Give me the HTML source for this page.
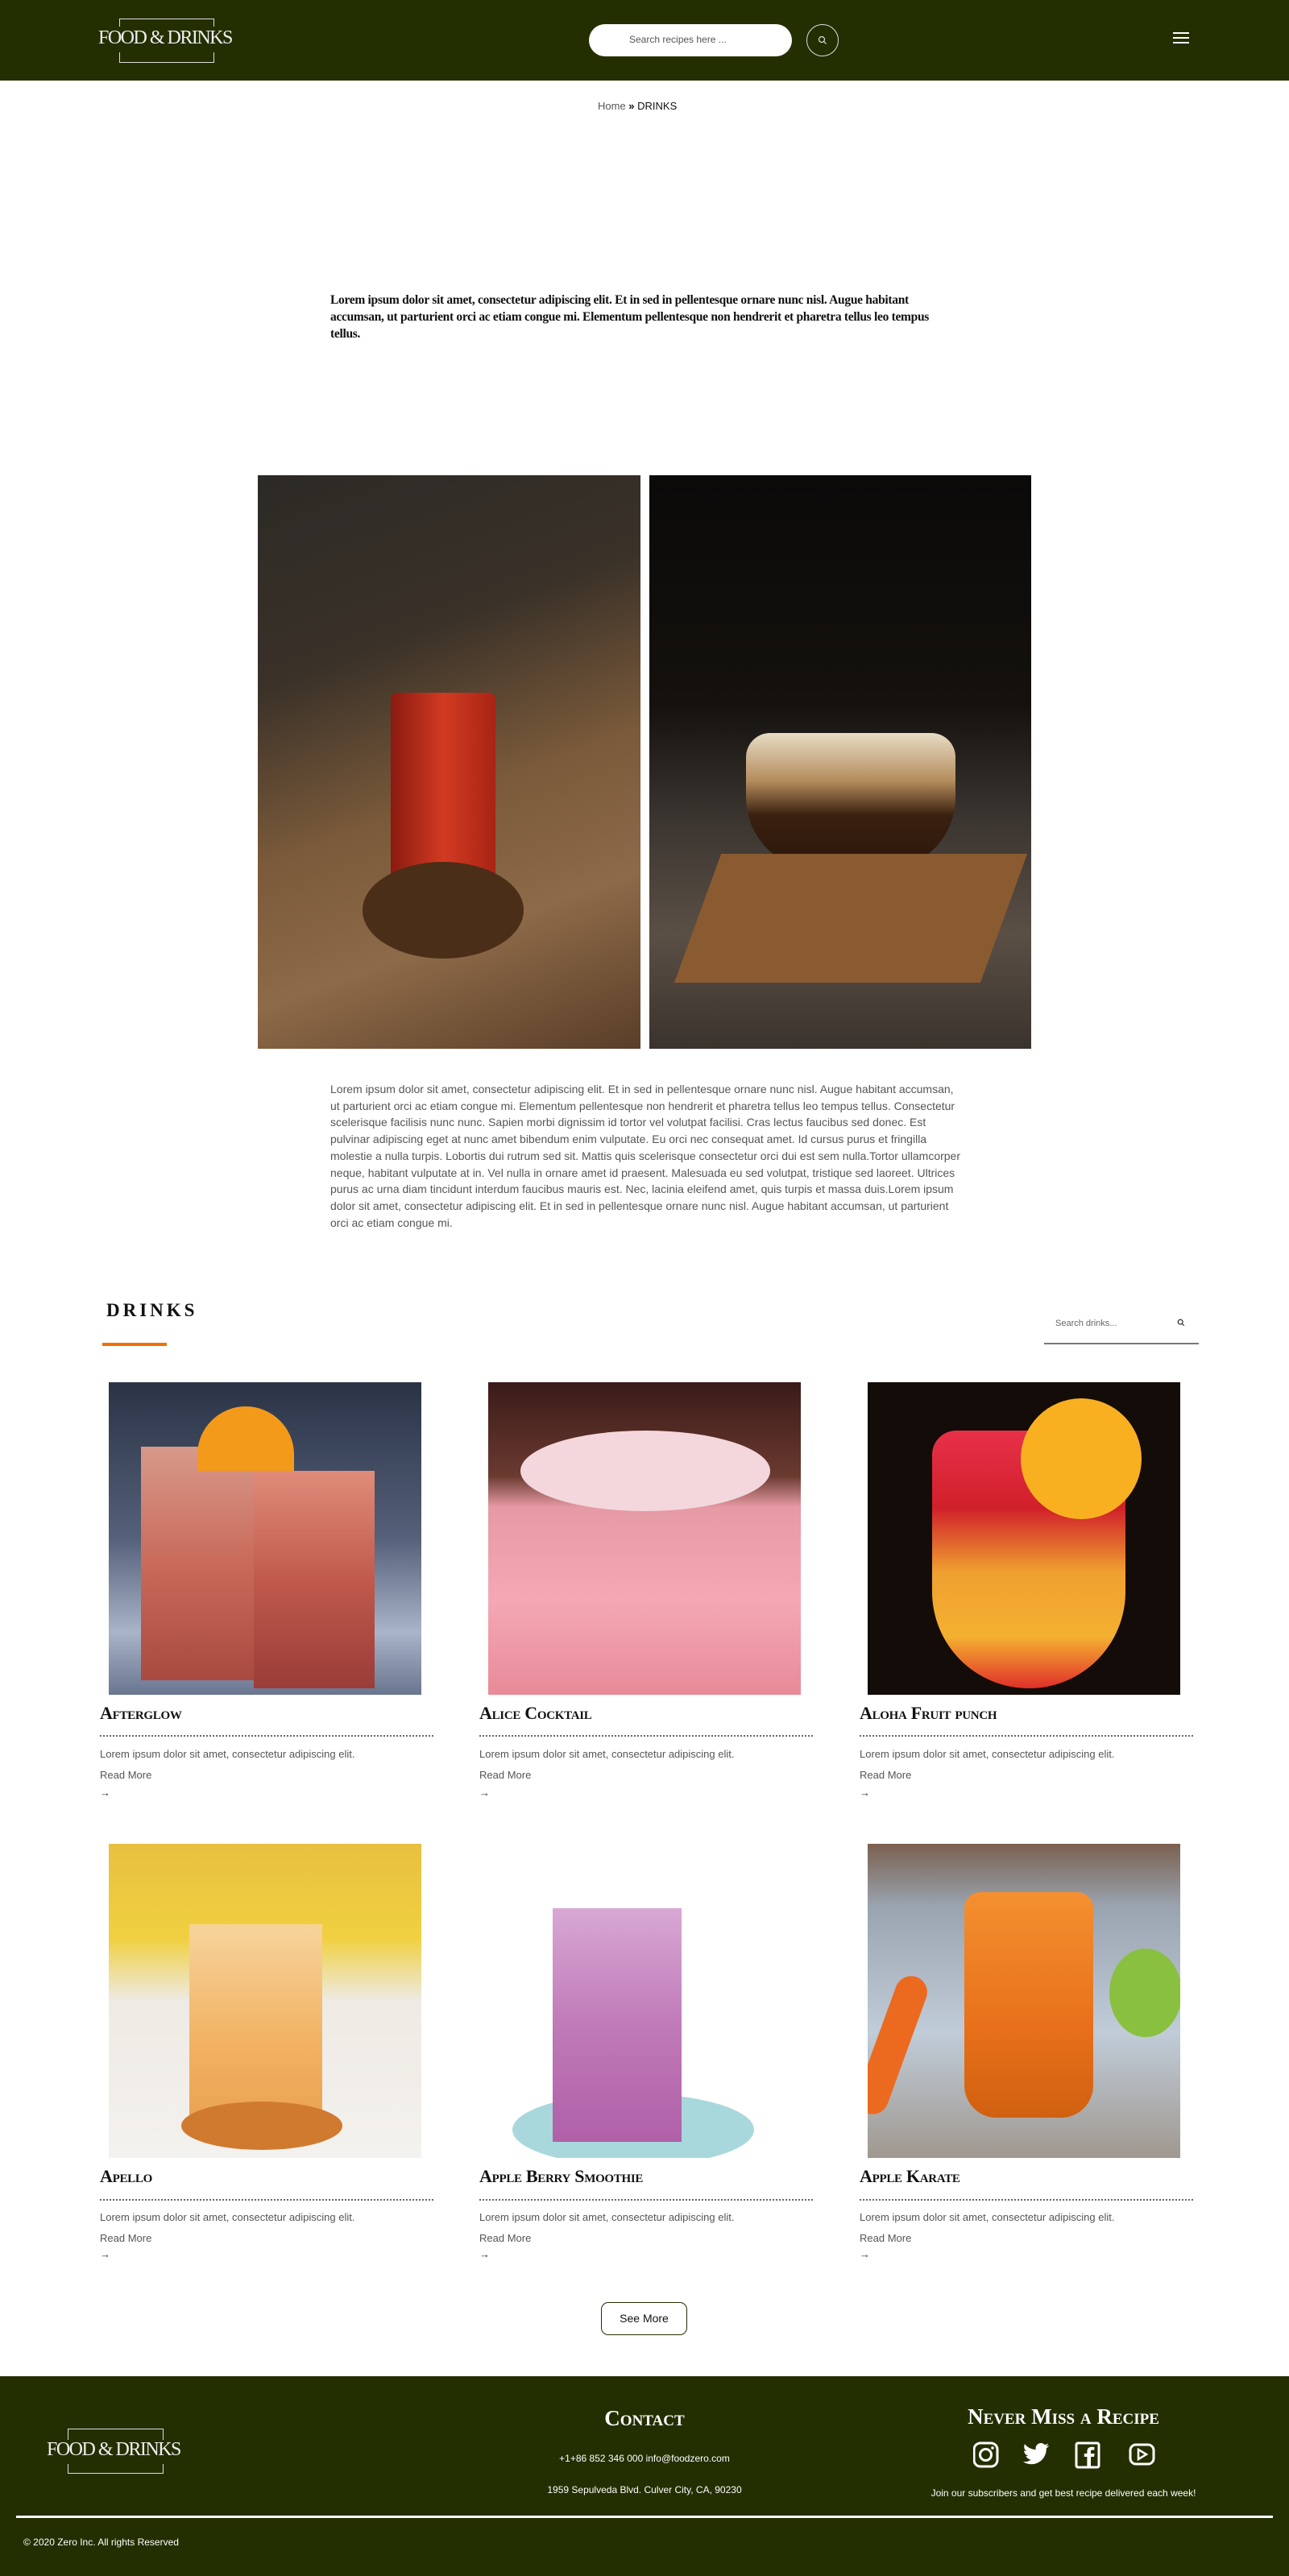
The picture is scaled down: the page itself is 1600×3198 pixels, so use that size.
<!DOCTYPE html>
<html><head><meta charset="utf-8"><style>
*{margin:0;padding:0;box-sizing:border-box}
body{width:1600px;height:3198px;position:relative;background:#fff;font-family:"Liberation Sans",sans-serif;overflow:hidden}
.a{position:absolute}
.hdr{left:0;top:0;width:1600px;height:100px;background:#232f00}
.logo{color:#eee;font-family:"Liberation Serif",serif;font-size:24px;letter-spacing:-1.5px;font-weight:300}
.p{font-size:14px;color:#555;line-height:20.7px}
.t{font-family:"Liberation Serif",serif;font-weight:bold;font-variant:small-caps;font-size:22px;color:#111;letter-spacing:-0.3px}
.dot{height:0;border-top:2px dotted #666}
.ct{font-size:13px;color:#555}
.img{overflow:hidden}
.ft{color:#fff}
</style></head><body>
<div class="a hdr"></div>
<div class="a" style="left:148px;top:23px;width:118px;height:55px;border:1.5px solid #ddd"></div>
<div class="a" style="left:120px;top:33px;width:172px;height:32px;background:#232f00"></div>
<div class="a logo" style="left:122px;top:34px">FOOD &amp; DRINKS</div>
<div class="a" style="left:731px;top:30px;width:252px;height:40px;background:#fff;border-radius:20px;font-size:12px;color:#555;padding:12px 0 0 50px">Search recipes here ...</div>
<div class="a" style="left:1001px;top:30px;width:40px;height:40px;border:1.5px solid #ddd;border-radius:50%"></div>
<svg class="a" style="left:1015px;top:44px" width="12" height="12" viewBox="0 0 12 12"><circle cx="5" cy="5" r="3.5" fill="none" stroke="#ddd" stroke-width="1.2"/><line x1="7.5" y1="7.5" x2="10.5" y2="10.5" stroke="#ddd" stroke-width="1.2"/></svg>
<div class="a" style="left:1456px;top:40px;width:20px;height:2px;background:#fff;box-shadow:0 6px 0 #fff,0 12px 0 #fff"></div>
<div class="a" style="left:742px;top:124px;font-size:13px;color:#555">Home <b style="color:#111">&#187;</b> <span style="color:#111">DRINKS</span></div>
<div class="a" style="left:410px;top:362px;width:772px;font-family:'Liberation Serif',serif;font-weight:bold;font-size:15.5px;line-height:21px;color:#111;letter-spacing:-0.3px">Lorem ipsum dolor sit amet, consectetur adipiscing elit. Et in sed in pellentesque ornare nunc nisl. Augue habitant accumsan, ut parturient orci ac etiam congue mi. Elementum pellentesque non hendrerit et pharetra tellus leo tempus tellus.</div>
<!-- hero images -->
<div class="a img" style="left:320px;top:590px;width:475px;height:712px;background:linear-gradient(160deg,#2c2a26 0%,#3a3128 30%,#7a5a3a 55%,#8d6a48 75%,#5a3e28 100%)">
<div class="a" style="left:165px;top:270px;width:130px;height:290px;background:linear-gradient(90deg,#8a1a10,#d23a22,#a82414);border-radius:8px 8px 20px 20px"></div>
<div class="a" style="left:130px;top:480px;width:200px;height:120px;background:#4a2e18;border-radius:50%"></div>
</div>
<div class="a img" style="left:806px;top:590px;width:474px;height:712px;background:linear-gradient(180deg,#0b0a09 0%,#14110e 40%,#3b3530 60%,#5a4f45 80%,#3a332d 100%)">
<div class="a" style="left:120px;top:320px;width:260px;height:170px;background:linear-gradient(180deg,#e7dcc5 0%,#b48c5c 35%,#3a2010 60%,#2a170a 100%);border-radius:30px 30px 90px 90px"></div>
<div class="a" style="left:60px;top:470px;width:380px;height:160px;background:#8a5a30;transform:skewX(-20deg)"></div>
</div>
<div class="a p" style="left:410px;top:1342px;width:782px">Lorem ipsum dolor sit amet, consectetur adipiscing elit. Et in sed in pellentesque ornare nunc nisl. Augue habitant accumsan, ut parturient orci ac etiam congue mi. Elementum pellentesque non hendrerit et pharetra tellus leo tempus tellus. Consectetur scelerisque facilisis nunc nunc. Sapien morbi dignissim id tortor vel volutpat facilisi. Cras lectus faucibus sed donec. Est pulvinar adipiscing eget at nunc amet bibendum enim vulputate. Eu orci nec consequat amet. Id cursus purus et fringilla molestie a nulla turpis. Lobortis dui rutrum sed sit. Mattis quis scelerisque consectetur orci dui est sem nulla.Tortor ullamcorper neque, habitant vulputate at in. Vel nulla in ornare amet id praesent. Malesuada eu sed volutpat, tristique sed laoreet. Ultrices purus ac urna diam tincidunt interdum faucibus mauris est. Nec, lacinia eleifend amet, quis turpis et massa duis.Lorem ipsum dolor sit amet, consectetur adipiscing elit. Et in sed in pellentesque ornare nunc nisl. Augue habitant accumsan, ut parturient orci ac etiam congue mi.</div>
<div class="a" style="left:132px;top:1614px;font-family:'Liberation Serif',serif;font-weight:bold;font-size:23px;letter-spacing:4px;color:#111">DRINKS</div>
<div class="a" style="left:127px;top:1667px;width:80px;height:4px;background:#f07000"></div>
<div class="a" style="left:1310px;top:1637px;font-size:11px;color:#666">Search drinks...</div>
<svg class="a" style="left:1461px;top:1637px" width="10" height="10" viewBox="0 0 12 12"><circle cx="5" cy="5" r="3.5" fill="none" stroke="#222" stroke-width="1.4"/><line x1="7.5" y1="7.5" x2="10.5" y2="10.5" stroke="#222" stroke-width="1.4"/></svg>
<div class="a" style="left:1296px;top:1667px;width:192px;height:2px;background:#777"></div>

<!-- row1 -->
<div class="a img" style="left:135px;top:1716px;width:388px;height:388px;background:linear-gradient(180deg,#2a3345,#55607a 50%,#a9b4c9 80%,#6a7590)"><div class="a" style="left:40px;top:80px;width:140px;height:290px;background:linear-gradient(180deg,#d7998a,#c96a5a 50%,#a94a40)"></div><div class="a" style="left:180px;top:110px;width:150px;height:270px;background:linear-gradient(180deg,#e08c7a,#c05a4c 50%,#9a3c38)"></div><div class="a" style="left:110px;top:30px;width:120px;height:80px;background:#f39a1a;border-radius:60px 60px 0 0"></div></div>
<div class="a img" style="left:606px;top:1716px;width:388px;height:388px;background:linear-gradient(180deg,#3a1a18,#6a3a30 30%,#e69aa4 40%,#f4a8b4 70%,#e88a98)"><div class="a" style="left:40px;top:60px;width:310px;height:100px;background:#f3d7dc;border-radius:50%"></div></div>
<div class="a img" style="left:1077px;top:1716px;width:388px;height:388px;background:#140c08"><div class="a" style="left:80px;top:60px;width:240px;height:320px;background:linear-gradient(180deg,#e8304a 0%,#d0202a 30%,#f0a030 55%,#f4b030 80%,#e0302a 100%);border-radius:30px 30px 120px 120px"></div><div class="a" style="left:190px;top:20px;width:150px;height:150px;background:#f8b020;border-radius:50%"></div></div>
<div class="a t" style="left:124px;top:2114px">Afterglow</div>
<div class="a t" style="left:595px;top:2114px">Alice Cocktail</div>
<div class="a t" style="left:1067px;top:2114px">Aloha Fruit punch</div>
<div class="a dot" style="left:124px;top:2154px;width:414px"></div>
<div class="a dot" style="left:595px;top:2154px;width:414px"></div>
<div class="a dot" style="left:1067px;top:2154px;width:414px"></div>
<div class="a ct" style="left:124px;top:2170px">Lorem ipsum dolor sit amet, consectetur adipiscing elit.</div>
<div class="a ct" style="left:595px;top:2170px">Lorem ipsum dolor sit amet, consectetur adipiscing elit.</div>
<div class="a ct" style="left:1067px;top:2170px">Lorem ipsum dolor sit amet, consectetur adipiscing elit.</div>
<div class="a ct" style="left:124px;top:2196px">Read More</div>
<div class="a ct" style="left:595px;top:2196px">Read More</div>
<div class="a ct" style="left:1067px;top:2196px">Read More</div>
<div class="a ct" style="left:124px;top:2218px;color:#333">&#8594;</div>
<div class="a ct" style="left:595px;top:2218px;color:#333">&#8594;</div>
<div class="a ct" style="left:1067px;top:2218px;color:#333">&#8594;</div>

<!-- row2 -->
<div class="a img" style="left:135px;top:2289px;width:388px;height:390px;background:linear-gradient(180deg,#e8c040 0%,#f0d040 30%,#eeeae4 50%,#f4f2ee 100%)"><div class="a" style="left:100px;top:100px;width:165px;height:260px;background:linear-gradient(180deg,#f6d49c,#f2b060 60%,#e8a050)"></div><div class="a" style="left:90px;top:320px;width:200px;height:60px;background:#d07a30;border-radius:50%"></div></div>
<div class="a img" style="left:606px;top:2289px;width:388px;height:390px;background:#fff"><div class="a" style="left:30px;top:310px;width:300px;height:90px;background:#a8d8dc;border-radius:50%"></div><div class="a" style="left:80px;top:80px;width:160px;height:290px;background:linear-gradient(180deg,#d8a8d4,#c07ab8 50%,#b060a8)"></div></div>
<div class="a img" style="left:1077px;top:2289px;width:388px;height:390px;background:linear-gradient(180deg,#7a6050 0%,#9aa4b0 20%,#c0ccd8 60%,#a09890 100%)"><div class="a" style="left:120px;top:60px;width:160px;height:280px;background:linear-gradient(180deg,#f49030,#e8701a 60%,#d06010);border-radius:20px 20px 40px 40px"></div><div class="a" style="left:300px;top:130px;width:90px;height:110px;background:#8ac040;border-radius:50%"></div><div class="a" style="left:10px;top:160px;width:40px;height:180px;background:#ec6a20;border-radius:20px;transform:rotate(20deg)"></div></div>
<div class="a t" style="left:124px;top:2689px">Apello</div>
<div class="a t" style="left:595px;top:2689px">Apple Berry Smoothie</div>
<div class="a t" style="left:1067px;top:2689px">Apple Karate</div>
<div class="a dot" style="left:124px;top:2730px;width:414px"></div>
<div class="a dot" style="left:595px;top:2730px;width:414px"></div>
<div class="a dot" style="left:1067px;top:2730px;width:414px"></div>
<div class="a ct" style="left:124px;top:2745px">Lorem ipsum dolor sit amet, consectetur adipiscing elit.</div>
<div class="a ct" style="left:595px;top:2745px">Lorem ipsum dolor sit amet, consectetur adipiscing elit.</div>
<div class="a ct" style="left:1067px;top:2745px">Lorem ipsum dolor sit amet, consectetur adipiscing elit.</div>
<div class="a ct" style="left:124px;top:2771px">Read More</div>
<div class="a ct" style="left:595px;top:2771px">Read More</div>
<div class="a ct" style="left:1067px;top:2771px">Read More</div>
<div class="a ct" style="left:124px;top:2791px;color:#333">&#8594;</div>
<div class="a ct" style="left:595px;top:2791px;color:#333">&#8594;</div>
<div class="a ct" style="left:1067px;top:2791px;color:#333">&#8594;</div>

<div class="a" style="left:746px;top:2858px;width:107px;height:41px;border:1.5px solid #232f00;border-radius:9px;font-size:14px;color:#111;text-align:center;line-height:38px">See More</div>

<!-- footer -->
<div class="a" style="left:0;top:2950px;width:1600px;height:248px;background:#232f00"></div>
<div class="a" style="left:84px;top:3015px;width:119px;height:56px;border:1.5px solid #ddd"></div>
<div class="a" style="left:55px;top:3029px;width:175px;height:30px;background:#232f00"></div>
<div class="a logo" style="left:58px;top:3028px">FOOD &amp; DRINKS</div>
<div class="a ft" style="left:600px;width:400px;top:2987px;text-align:center;font-family:'Liberation Serif',serif;font-weight:bold;font-variant:small-caps;font-size:27px">Contact</div>
<div class="a ft" style="left:600px;width:400px;top:3045px;text-align:center;font-size:12px">+1+86 852 346 000 info@foodzero.com</div>
<div class="a ft" style="left:600px;width:400px;top:3084px;text-align:center;font-size:12px">1959 Sepulveda Blvd. Culver City, CA, 90230</div>
<div class="a ft" style="left:1120px;width:400px;top:2985px;text-align:center;font-family:'Liberation Serif',serif;font-weight:bold;font-variant:small-caps;font-size:27px">Never Miss a Recipe</div>
<svg class="a" style="left:1208px;top:3030px" width="226" height="36" viewBox="0 0 226 36">
<rect x="1" y="3" width="29" height="29" rx="8" fill="none" stroke="#fff" stroke-width="3"/><circle cx="15.5" cy="17.5" r="7" fill="none" stroke="#fff" stroke-width="3"/><circle cx="24" cy="9" r="1.8" fill="#fff"/>
<path d="M94 6c-1.2.6-2.5.9-3.8 1.1 1.4-.8 2.4-2.1 2.9-3.6-1.3.8-2.7 1.3-4.2 1.6-1.2-1.3-3-2.1-4.8-2.1-3.6 0-6.6 3-6.6 6.6 0 .5.1 1 .2 1.5-5.5-.3-10.4-2.9-13.6-6.9-.6 1-.9 2.1-.9 3.3 0 2.3 1.2 4.3 2.9 5.5-1.1 0-2.1-.3-3-.8v.1c0 3.2 2.3 5.9 5.3 6.5-.6.2-1.1.2-1.7.2-.4 0-.8 0-1.2-.1.8 2.6 3.3 4.5 6.2 4.6-2.3 1.8-5.1 2.8-8.2 2.8-.5 0-1.1 0-1.6-.1 2.9 1.9 6.4 3 10.1 3 12.1 0 18.8-10 18.8-18.8v-.9c1.3-.9 2.4-2.1 3.3-3.4z" fill="#fff"/>
<rect x="128" y="3" width="28" height="30" rx="2" fill="none" stroke="#fff" stroke-width="3"/><path d="M146 33V20h4l.6-4H146v-2.5c0-1.2.4-2 2-2h2.4V8c-.4 0-1.8-.2-3.4-.2-3.4 0-5.600 2-5.6 5.7V16h-3.6v4h3.6v13z" fill="#fff"/>
<rect x="195" y="5" width="29" height="24" rx="7" fill="none" stroke="#fff" stroke-width="3"/><path d="M205 11v12l10-6z" fill="none" stroke="#fff" stroke-width="2.5"/>
</svg>
<div class="a ft" style="left:1120px;width:400px;top:3088px;text-align:center;font-size:12px">Join our subscribers and get best recipe delivered each week!</div>
<div class="a" style="left:20px;top:3123px;width:1560px;height:3px;background:#fff"></div>
<div class="a ft" style="left:29px;top:3149px;font-size:12px">&copy; 2020 Zero Inc. All rights Reserved</div>
</body></html>
